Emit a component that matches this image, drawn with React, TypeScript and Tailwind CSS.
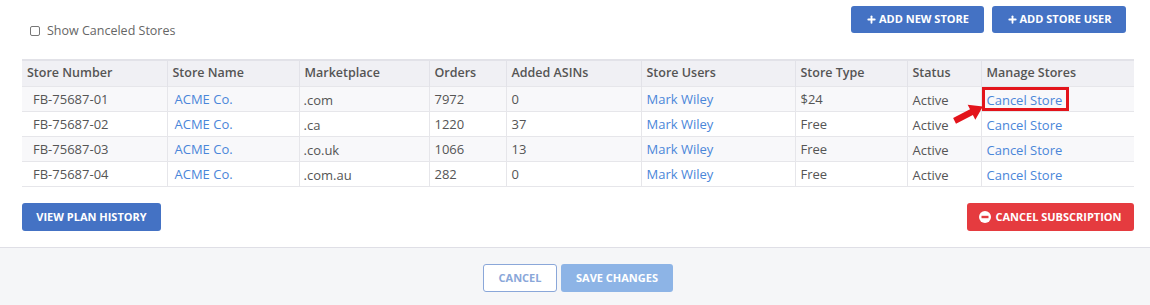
import { Plus } from "lucide-react";

type Store = {
  number: string;
  name: string;
  market: string;
  orders: number;
  asins: number;
  user: string;
  type: string;
  status: string;
};

const stores: Store[] = [
  { number: "FB-75687-01", name: "ACME Co.", market: ".com", orders: 7972, asins: 0, user: "Mark Wiley", type: "$24", status: "Active" },
  { number: "FB-75687-02", name: "ACME Co.", market: ".ca", orders: 1220, asins: 37, user: "Mark Wiley", type: "Free", status: "Active" },
  { number: "FB-75687-03", name: "ACME Co.", market: ".co.uk", orders: 1066, asins: 13, user: "Mark Wiley", type: "Free", status: "Active" },
  { number: "FB-75687-04", name: "ACME Co.", market: ".com.au", orders: 282, asins: 0, user: "Mark Wiley", type: "Free", status: "Active" },
];

const cols = [
  { label: "Store Number", w: 145 },
  { label: "Store Name", w: 132 },
  { label: "Marketplace", w: 130 },
  { label: "Orders", w: 77 },
  { label: "Added ASINs", w: 135 },
  { label: "Store Users", w: 154 },
  { label: "Store Type", w: 112 },
  { label: "Status", w: 74 },
  { label: "Manage Stores", w: 153 },
];

const font = { fontFamily: '"Open Sans", "Liberation Sans", sans-serif' };

function MinusDisc() {
  return (
    <svg width="12" height="12" viewBox="0 0 12 12">
      <circle cx="6" cy="6" r="6" fill="white" />
      <rect x="2.5" y="4.8" width="7" height="2.4" fill="#e53b3f" />
    </svg>
  );
}

export default function App() {
  return (
    <div className="w-[1150px] h-[305px] bg-white text-[#555] flex flex-col" style={font}>
      <div className="pl-[22px] pr-[16px] pt-[6px] flex-1">
        <div className="flex items-start justify-between">
          <label className="flex items-center gap-[7px] pl-[8px] pt-[16px] text-[12.5px] text-[#666]">
            <span className="w-[10px] h-[10px] border border-[#777] rounded-[2px] bg-white" />
            Show Canceled Stores
          </label>
          <div className="flex gap-[8px] pr-[8px]">
            <button className="h-[27px] w-[133px] rounded-[3px] bg-[#4472c4] text-white text-[11px] font-bold flex items-center justify-center gap-[2px]">
              <Plus size={11} strokeWidth={4} />
              ADD NEW STORE
            </button>
            <button className="h-[27px] w-[134px] rounded-[3px] bg-[#4472c4] text-white text-[11px] font-bold flex items-center justify-center gap-[2px]">
              <Plus size={11} strokeWidth={4} />
              ADD STORE USER
            </button>
          </div>
        </div>

        <table className="mt-[18px] w-[1112px] table-fixed border-collapse text-[13px]">
          <colgroup>
            {cols.map((c) => (
              <col key={c.label} style={{ width: c.w }} />
            ))}
          </colgroup>
          <thead>
            <tr className="h-[27px] bg-[#f0f0f4] border-t-2 border-[#e2e2e8]">
              {cols.map((c, i) => (
                <th
                  key={c.label}
                  className={`text-left font-semibold text-[12.5px] text-[#555] px-[5px] ${i > 0 ? "border-l border-[#e2e2e8]" : ""}`}
                >
                  {c.label}
                </th>
              ))}
            </tr>
          </thead>
          <tbody>
            {stores.map((s, r) => (
              <tr
                key={s.number}
                className={`h-[25px] border-t border-[#e6e6ea] ${r % 2 === 0 ? "bg-[#f8f8fa]" : "bg-white"} ${r === 3 ? "border-b border-b-[#e6e6ea]" : ""}`}
              >
                <td className="pl-[11px] pr-[5px]">{s.number}</td>
                <td className="pl-[7px] pr-[5px] border-l border-[#e6e6ea] text-[#4a86d9]">{s.name}</td>
                <td className="px-[4px] border-l border-[#e6e6ea] pt-[2px]">{s.market}</td>
                <td className="px-[5px] border-l border-[#e6e6ea]">{s.orders}</td>
                <td className="px-[5px] border-l border-[#e6e6ea]">{s.asins}</td>
                <td className="px-[5px] border-l border-[#e6e6ea] text-[#4a86d9]">{s.user}</td>
                <td className="px-[5px] border-l border-[#e6e6ea]">{s.type}</td>
                <td className="px-[5px] border-l border-[#e6e6ea] pt-[2px]">{s.status}</td>
                <td className="px-[5px] border-l border-[#e6e6ea] text-[#4a86d9] relative pt-[2px]">
                  Cancel Store
                  {r === 0 && (
                    <>
                      <span className="absolute left-0 top-0 w-[87px] h-[24px] border-[3px] border-[#e3141b]" />
                      <svg
                        className="absolute left-[-31px] top-[15px]"
                        width="34"
                        height="26"
                        viewBox="0 0 32 24"
                      >
                        <path
                          d="M30 4 L15.7 2.3 L17.9 6.7 L2 14.8 L4.7 20.2 L20.6 12.1 L22.9 16.5 Z"
                          fill="#e3141b"
                        />
                      </svg>
                    </>
                  )}
                </td>
              </tr>
            ))}
          </tbody>
        </table>

        <div className="flex justify-between mt-[16px]">
          <button className="h-[28px] w-[139px] rounded-[3px] bg-[#4472c4] text-white text-[11px] font-bold">
            VIEW PLAN HISTORY
          </button>
          <button className="h-[28px] w-[167px] rounded-[3px] bg-[#e53b3f] text-white text-[11px] font-bold flex items-center justify-center gap-[4px]">
            <MinusDisc />
            CANCEL SUBSCRIPTION
          </button>
        </div>
      </div>

      <div className="h-[58px] border-t border-[#dfdfe6] bg-[#f5f6f8] flex justify-center gap-[4px] pt-[16px] pl-[6px]">
        <button className="h-[28px] w-[74px] rounded-[3px] border border-[#8aa7d9] bg-white text-[#8aa7d9] text-[11px] font-bold">
          CANCEL
        </button>
        <button className="h-[28px] w-[112px] rounded-[3px] bg-[#8db4e6] text-white text-[11px] font-bold">
          SAVE CHANGES
        </button>
      </div>
    </div>
  );
}
